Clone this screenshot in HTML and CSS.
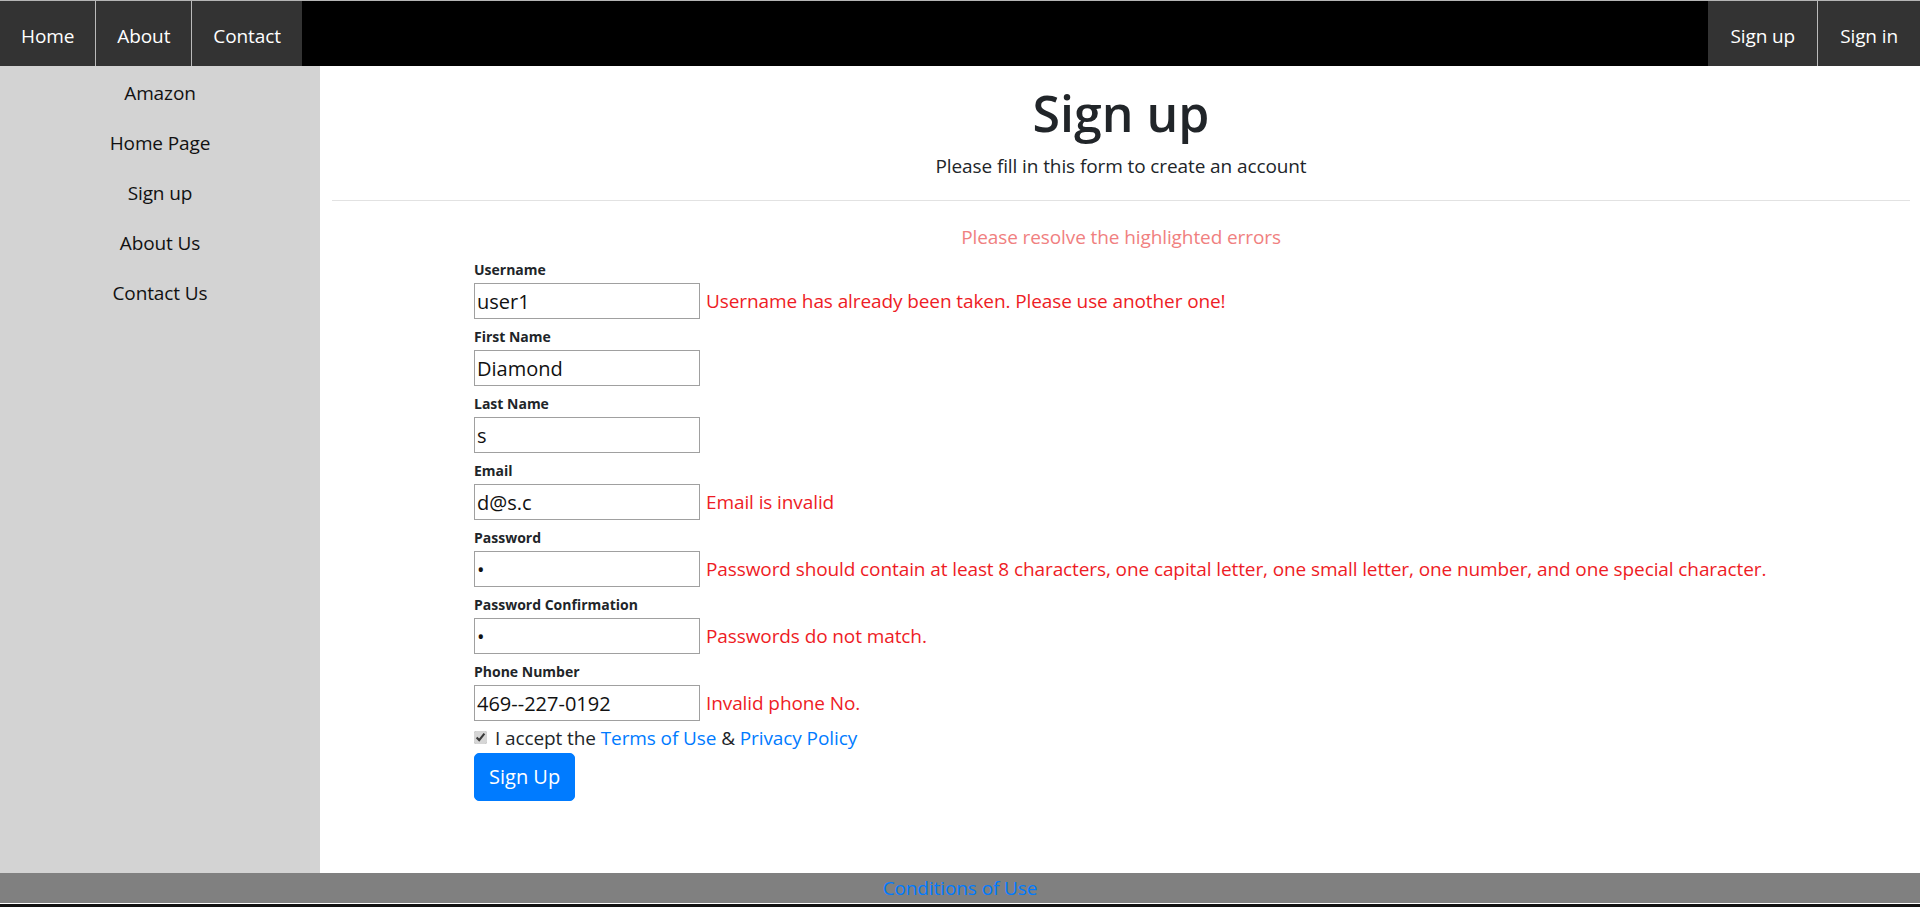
FILE: index.html
```html
<!DOCTYPE html>
<html lang="en">
<head>
<meta charset="utf-8">
<title>Sign up</title>
<link rel="stylesheet" href="styles.css">
</head>
<body>
<header class="topnav">
  <ul class="nav-left">
    <li><a href="#">Home</a></li>
    <li><a href="#">About</a></li>
    <li><a href="#">Contact</a></li>
  </ul>
  <ul class="nav-right">
    <li><a href="#">Sign up</a></li>
    <li><a href="#">Sign in</a></li>
  </ul>
</header>
<div class="layout">
  <aside class="sidebar">
    <a href="#">Amazon</a>
    <a href="#">Home Page</a>
    <a href="#">Sign up</a>
    <a href="#">About Us</a>
    <a href="#">Contact Us</a>
  </aside>
  <main class="main">
    <h1 class="title">Sign up</h1>
    <p class="subtitle">Please fill in this form to create an account</p>
    <hr class="divider">
    <p class="summary">Please resolve the highlighted errors</p>
    <form class="signup-form">
      <div class="field">
        <label class="label">Username</label>
        <div class="row"><input class="input" type="text" value="user1"><span class="error">Username has already been taken. Please use another one!</span></div>
      </div>
      <div class="field">
        <label class="label">First Name</label>
        <div class="row"><input class="input" type="text" value="Diamond"></div>
      </div>
      <div class="field">
        <label class="label">Last Name</label>
        <div class="row"><input class="input" type="text" value="s"></div>
      </div>
      <div class="field">
        <label class="label">Email</label>
        <div class="row"><input class="input" type="text" value="d@s.c"><span class="error">Email is invalid</span></div>
      </div>
      <div class="field">
        <label class="label">Password</label>
        <div class="row"><input class="input" type="password" value="a"><span class="error">Password should contain at least 8 characters, one capital letter, one small letter, one number, and one special character.</span></div>
      </div>
      <div class="field">
        <label class="label">Password Confirmation</label>
        <div class="row"><input class="input" type="password" value="a"><span class="error">Passwords do not match.</span></div>
      </div>
      <div class="field">
        <label class="label">Phone Number</label>
        <div class="row"><input class="input" type="text" value="469--227-0192"><span class="error">Invalid phone No.</span></div>
      </div>
      <div class="accept">
        <input class="check" type="checkbox" checked>
        <span>I accept the <a href="#">Terms of Use</a> &amp; <a href="#">Privacy Policy</a></span>
      </div>
      <button class="btn" type="button">Sign Up</button>
    </form>
  </main>
</div>
<footer class="footer"><a href="#">Conditions of Use</a></footer>
<div class="bottom-strip"></div>
</body>
</html>
```
FILE: styles.css
```css
* { box-sizing: border-box; }
html, body { margin: 0; padding: 0; }
body {
  font-family: "Segoe UI", "Open Sans", "Noto Sans", sans-serif;
  font-size: 19px;
  letter-spacing: -0.1px;
  line-height: 30px;
  color: #212529;
  background: #fff;
}
a { color: #007bff; text-decoration: none; }

.topnav {
  display: flex;
  justify-content: space-between;
  background: #000;
  border-top: 1px solid #b5b5b5;
  height: 66px;
}
.nav-left, .nav-right {
  display: flex;
  list-style: none;
  margin: 0;
  padding: 0;
}
.nav-left li, .nav-right li {
  background: #333;
  border-right: 1px solid #bbb;
}
.nav-left li:last-child, .nav-right li:last-child { border-right: none; }
.nav-left a, .nav-right a {
  display: block;
  color: #fff;
  padding: 20px 21px 15px;
  line-height: 30px;
}
.nav-right a { padding: 20px 22px 15px; }

.layout {
  display: flex;
  height: 807px;
}
.sidebar {
  width: 320px;
  flex: 0 0 320px;
  background: #d3d3d3;
  display: flex;
  flex-direction: column;
  padding-top: 2px;
}
.sidebar a {
  color: #111;
  text-align: center;
  padding: 10px 0;
  line-height: 30px;
}
.main {
  flex: 1;
  padding: 0 10px 0 12px;
}
.title {
  margin: 17px 0 8px;
  text-align: center;
  font-size: 50px;
  line-height: 60px;
  font-weight: 600;
  letter-spacing: 0;
}
.subtitle {
  margin: 0;
  text-align: center;
}
.divider {
  margin: 19px 0 20px;
  border: 0;
  border-top: 1px solid #e2e2e2;
}
.summary {
  margin: 0;
  text-align: center;
  color: #f08080;
  padding-top: 1px;
}
.signup-form {
  margin-left: 142px;
}
.field { padding-top: 7px; }
.label {
  display: block;
  font-size: 14px;
  font-weight: 700;
  line-height: 22px;
  margin-bottom: 2px;
  letter-spacing: 0;
}
.row {
  display: flex;
  align-items: center;
  gap: 6px;
}
.input {
  width: 226px;
  height: 36px;
  border: 1px solid #a0a0a0;
  padding: 1px 2px;
  font: inherit;
  font-size: 20px;
  color: #111;
  background: #fff;
}
.error { color: #ee1c25; white-space: nowrap; }
.accept {
  display: flex;
  align-items: center;
  margin-top: 2px;
  line-height: 30px;
}
.check {
  width: 13px;
  height: 13px;
  margin: 0 8px 2px 0;
  accent-color: #d6d6d6;
}
.btn {
  background: #007bff;
  color: #fff;
  border: 1px solid #007bff;
  border-radius: 5px;
  font: inherit;
  font-size: 20px;
  line-height: 30px;
  padding: 8px 14px;
  margin-top: 0;
}
.footer {
  height: 30px;
  background: #808080;
  text-align: center;
  line-height: 30px;
}
.bottom-strip {
  border-top: 1px solid #fff;
  height: 4px;
  background: #111;
}
```
